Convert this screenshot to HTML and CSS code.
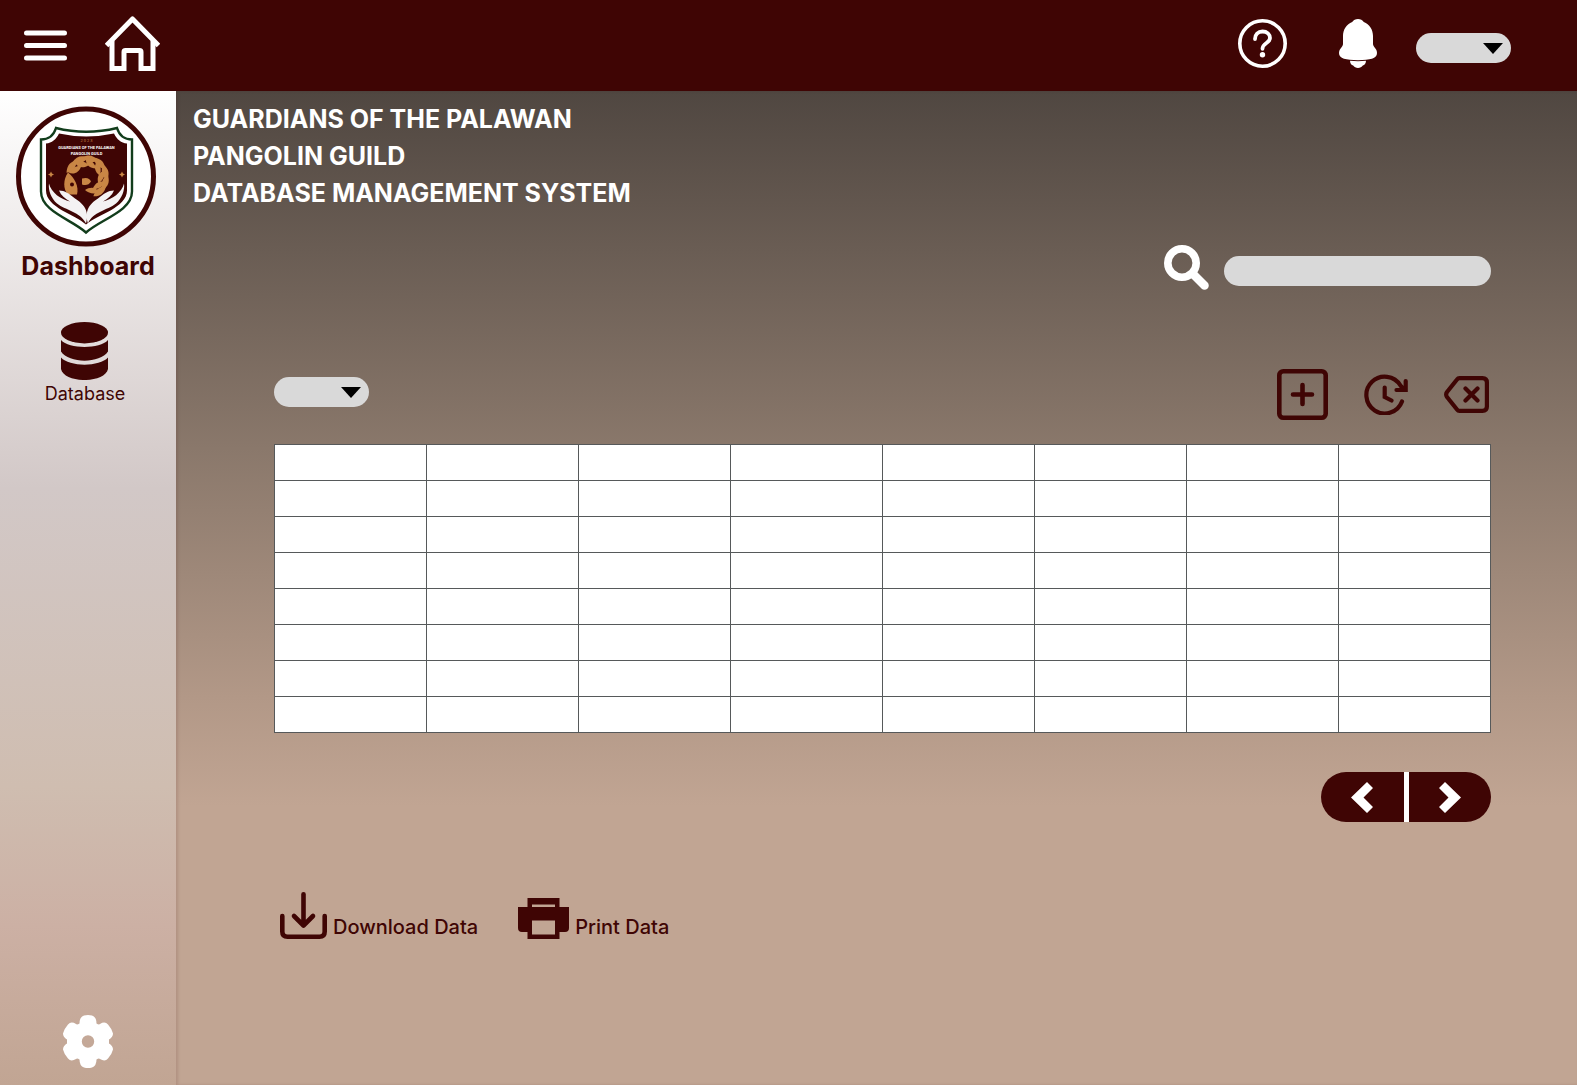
FILE: index.html
```html
<!DOCTYPE html>
<html lang="en">
<head>
<meta charset="utf-8">
<meta name="viewport" content="width=device-width, initial-scale=1">
<title>Guardians of the Palawan Pangolin Guild</title>
<link rel="stylesheet" href="styles.css">
</head>
<body>
<header class="topbar">
  <button class="icon-btn" type="button" aria-label="Menu">
    <svg width="43" height="31" viewBox="0 0 43 31" fill="none" stroke="currentColor" stroke-width="5" stroke-linecap="round"><path d="M2.5 3H40.500M2.500 15.500H40.500M2.500 28H40.500"/></svg>
  </button>
  <a class="icon-btn home" href="#" aria-label="Home">
    <svg width="55" height="55" viewBox="0 0 55 55" fill="none" stroke="currentColor" stroke-width="5"><path d="M1.500 29.500L27.500 3L53.500 29.500" stroke-linejoin="round"/><path d="M7 25V52.500H19V36Q19 34.500 20.500 34.500H34.500Q36 34.500 36 36V52.500H48V25"/></svg>
  </a>
  <div class="topbar-tools">
    <button class="icon-btn" type="button" aria-label="Help">
      <svg width="49" height="49" viewBox="0 0 49 49" fill="none" stroke="currentColor"><circle cx="24.500" cy="24.500" r="22.700" stroke-width="3.600"/><path d="M17 20C17 15.500 20 12.500 24.500 12.500C29 12.500 32 15.300 32 19C32 24.200 24.500 23.800 24.500 29.800" stroke-width="3.800" stroke-linecap="round"/><circle cx="24.500" cy="35.700" r="2.700" fill="currentColor" stroke="none"/></svg>
    </button>
    <button class="icon-btn" type="button" aria-label="Notifications">
      <svg width="38" height="49" viewBox="0 0 38 49" fill="currentColor"><path d="M19 0C21.500 0 23.500 1.200 24.800 3C30.500 5.500 34 10.500 34 17V25C34 28 38 29.500 38 34C38 39.500 31 41.200 19 41.200S0 39.500 0 34C0 29.500 4 28 4 25V17C4 10.500 7.500 5.500 13.200 3C14.500 1.200 16.500 0 19 0Z"/><path d="M11 41.800Q19 42.600 27 41.800C27 44.500 25.500 46 23.800 46.500C22 49.700 16 49.700 14.200 46.500C12.500 46 11 44.500 11 41.800Z"/></svg>
    </button>
    <span class="picker"><select aria-label="Account"><option></option></select><svg width="20" height="11" viewBox="0 0 20 11"><path d="M0 0H20L10 11Z"/></svg></span>
  </div>
</header>
<div class="layout">
  <nav class="sidebar">
    <a class="nav-link dashboard" href="#">
      <svg class="logo" viewBox="0 0 140 140" role="img" aria-label="Guild logo">
        <circle cx="70" cy="70" r="67.500" fill="#fff" stroke="#3f0504" stroke-width="5"/>
        <path d="M40 21.500Q70 29 101 21.500C103 28 108 33 116 33V85C116 105 84 113 70 126C56 113 25 105 25 85V33C33 33 38 28 40 21.500Z" fill="#fff" stroke="#123d1c" stroke-width="2.400"/>
        <path d="M43 27Q70 33 98 27C101 33 105 36.500 111 37V84C111 101 82 108 70 118C59 108 30 101 30 84V37C36 36.500 40 33 43 27Z" fill="#3f0504"/>
        <g class="logo-text" text-anchor="middle"><text class="logo-year" x="70.500" y="35.500">2 0 2 3</text><text x="70.500" y="42">GUARDIANS OF THE PALAWAN</text><text x="70.500" y="48.500">PANGOLIN GUILD</text></g>
        <g fill="#c98645">
          <path d="M52 66C47 73 47 83 52 88L61 88C63 80 59 72 52 66Z"/><path d="M66 72Q73 70 75 75Q72 80 66 78Z"/>
          <path id="scale" d="M70 52C75 53 79 57 80 62C74 62 69 58 70 52Z"/>
          <use href="#scale" transform="rotate(36 71 71)"/><use href="#scale" transform="rotate(72 71 71)"/><use href="#scale" transform="rotate(108 71 71)"/><use href="#scale" transform="rotate(144 71 71)"/><use href="#scale" transform="rotate(-36 71 71)"/><use href="#scale" transform="rotate(-72 71 71)"/>
          <g transform="rotate(16 71 71)"><path id="outer" d="M72 50C80 49 84 52 86 58C80 59 74 56 72 50Z"/><use href="#outer" transform="rotate(32 71 71)"/><use href="#outer" transform="rotate(64 71 71)"/><use href="#outer" transform="rotate(96 71 71)"/><use href="#outer" transform="rotate(-32 71 71)"/><use href="#outer" transform="rotate(-64 71 71)"/><use href="#outer" transform="rotate(-96 71 71)"/></g>
          <path d="M35 65L36 67L38 68L36 69L35 71L34 69L32 68L34 67ZM106 65L107 67L109 68L107 69L106 71L105 69L103 68L105 67Z"/>
        </g>
        <circle cx="56" cy="78" r="2" fill="#3f0504"/>
        <g fill="#f4f2f3"><path id="hand" d="M33 77C32 83 35 92 41 97C50 104 64 105 70 117C74 104 67 97 59 92C53 87 49 84 43 84C45 89 49 92 54 95C45 93 35 86 33 77Z"/><path d="M108 77C109 83 106 92 100 97C91 104 77 105 72 117C68 104 74 97 82 92C88 87 92 84 98 84C96 89 92 92 87 95C96 93 106 86 108 77Z"/></g>
      </svg>
      <span class="dashboard-label">Dashboard</span>
    </a>
    <a class="nav-link database" href="#">
      <svg width="47" height="58" viewBox="0 0 47 58" fill="currentColor"><ellipse cx="23.500" cy="10.700" rx="23.500" ry="10.700"/><path d="M0 18C8 27.300 39 27.300 47 18V29.500C39 41.700 8 41.700 0 29.500Z"/><path d="M0 35.500C8 45 39 45 47 35.500V47C44 61.700 3 61.700 0 47Z"/></svg>
      <span>Database</span>
    </a>
    <button class="icon-btn settings" type="button" aria-label="Settings">
      <svg width="50" height="53" viewBox="0 0 50 53" fill="currentColor" fill-rule="evenodd"><path d="M21 0.500Q25 -0.500 29 0.500Q33.500 2 33.500 8.500Q36 10 37 9Q42 6 45 9.500Q49 14 50 18.500Q50 22 46 24.500V28.500Q50 31 50 34.500Q49 39 45 43.500Q42 47 37 44Q36 43 33.500 44.500Q33.500 51 29 52.500Q25 53.500 21 52.500Q16.500 51 16.500 44.500Q14 43 13 44Q8 47 5 43.500Q1 39 0 34.500Q0 31 4 28.500V24.500Q0 22 0 18.500Q1 14 5 9.500Q8 6 13 9Q14 10 16.500 8.500Q16.500 2 21 0.500ZM25 20.300A6.200 6.200 0 1 0 25 32.700A6.200 6.200 0 1 0 25 20.300Z"/></svg>
    </button>
  </nav>
  <main class="main">
    <h1 class="title">GUARDIANS OF THE PALAWAN<br>PANGOLIN GUILD<br>DATABASE MANAGEMENT SYSTEM</h1>
    <div class="content">
      <form class="search" role="search">
        <label for="q" aria-label="Search"><svg width="45" height="45" viewBox="0 0 45 45" fill="none" stroke="currentColor"><circle cx="18" cy="18" r="14.200" stroke-width="7.600"/><path d="M29 29L40.500 40.500" stroke-width="8.500" stroke-linecap="round"/></svg></label>
        <input id="q" type="search">
      </form>
      <div class="toolbar">
        <span class="picker"><select aria-label="Table"><option></option></select><svg width="20" height="11" viewBox="0 0 20 11"><path d="M0 0H20L10 11Z"/></svg></span>
        <div class="actions">
          <button class="icon-btn" type="button" aria-label="Add"><svg width="51" height="51" viewBox="0 0 51 51" fill="none" stroke="currentColor" stroke-width="4.600" stroke-linecap="round"><rect x="2.300" y="2.300" width="46.400" height="46.400" rx="4"/><path d="M25.500 16V35M16 25.500H35"/></svg></button>
          <button class="icon-btn" type="button" aria-label="Update"><svg width="44" height="41" viewBox="0 0 44 41" fill="none" stroke="currentColor" stroke-width="4.200" stroke-linecap="round"><path d="M38 27.500A18.400 18.400 0 1 1 36.500 11.500L40 15.700M41.700 7V16H32.500M20.700 13.500V23L27.500 26.500"/></svg></button>
          <button class="icon-btn" type="button" aria-label="Delete"><svg width="45" height="37" viewBox="0 0 45 37" fill="none" stroke="currentColor" stroke-width="4.200" stroke-linecap="round" stroke-linejoin="round"><path d="M15.500 2.100H38.500Q42.900 2.100 42.900 6.500V30.500Q42.900 34.900 38.500 34.900H15.500Q14 34.900 13 33.500L3 21Q1.300 18.500 3 16L13 3.500Q14 2.100 15.500 2.100ZM21.500 12.500L33.500 24.500M33.500 12.500L21.500 24.500"/></svg></button>
        </div>
      </div>
      <table class="grid" aria-label="Records">
        <tbody>
          <tr><td></td><td></td><td></td><td></td><td></td><td></td><td></td><td></td></tr>
          <tr><td></td><td></td><td></td><td></td><td></td><td></td><td></td><td></td></tr>
          <tr><td></td><td></td><td></td><td></td><td></td><td></td><td></td><td></td></tr>
          <tr><td></td><td></td><td></td><td></td><td></td><td></td><td></td><td></td></tr>
          <tr><td></td><td></td><td></td><td></td><td></td><td></td><td></td><td></td></tr>
          <tr><td></td><td></td><td></td><td></td><td></td><td></td><td></td><td></td></tr>
          <tr><td></td><td></td><td></td><td></td><td></td><td></td><td></td><td></td></tr>
          <tr><td></td><td></td><td></td><td></td><td></td><td></td><td></td><td></td></tr>
        </tbody>
      </table>
      <div class="pager">
        <button type="button" aria-label="Previous page"><svg width="22" height="31" viewBox="0 0 22 31" fill="currentColor"><path d="M16 0L22 6L12.500 15.500L22 25L16 31L0 15.500Z"/></svg></button>
        <button type="button" aria-label="Next page"><svg width="22" height="31" viewBox="0 0 22 31" fill="currentColor"><path d="M6 0L0 6L9.500 15.500L0 25L6 31L22 15.500Z"/></svg></button>
      </div>
      <div class="exports">
        <button class="export" type="button"><svg width="47" height="47" viewBox="0 0 47 47" fill="none" stroke="currentColor" stroke-width="4.600" stroke-linecap="round" stroke-linejoin="round"><path d="M2.300 24V39.500Q2.300 44.700 7.500 44.700H39.500Q44.700 44.700 44.700 39.500V24M23.500 2.300V33M14 24L23.500 33.500L33 24"/></svg><span>Download Data</span></button>
        <button class="export" type="button"><svg width="51" height="41" viewBox="0 0 51 41" fill="currentColor" fill-rule="evenodd"><path d="M9.500 0H41.500V9H51V30Q51 34 47 34H41.500V41H9.500V34H4Q0 34 0 30V9H9.500ZM14 6.500V9H37V6.500ZM14 22.500V36.500H37V22.500Z"/></svg><span>Print Data</span></button>
      </div>
    </div>
  </main>
</div>
</body>
</html>
```
FILE: styles.css
```css
:root {
  --maroon: #3f0504;
  --pill: #d9d9d9;
}

* { box-sizing: border-box; }

body {
  margin: 0;
  min-height: 100vh;
  display: flex;
  flex-direction: column;
  font-family: Inter, "Liberation Sans", sans-serif;
  color: var(--maroon);
}

svg { display: block; flex: none; }

button, input, select { font: inherit; color: inherit; border: 0; padding: 0; }

.icon-btn { display: block; background: none; color: inherit; cursor: pointer; }

.topbar {
  display: flex;
  align-items: center;
  height: 91px;
  padding: 0 66px 4px 24px;
  background: var(--maroon);
  color: #fff;
}

.topbar > .icon-btn:first-child { padding-top: 4px; }

.home { margin-left: 38px; }

.topbar-tools {
  display: flex;
  align-items: center;
  margin-left: auto;
}

.topbar-tools .icon-btn { margin-right: 52px; }
.topbar-tools .icon-btn + .icon-btn { margin-right: 39px; }
.topbar-tools .picker { margin-top: 8px; }

.picker { position: relative; display: block; width: 95px; height: 30px; }

.picker select {
  appearance: none;
  width: 100%;
  height: 100%;
  border-radius: 15px;
  background: var(--pill);
  color: #000;
}

.picker svg { position: absolute; right: 8px; top: 10px; pointer-events: none; color: #000; }

.layout { flex: 1; display: flex; }

.sidebar {
  width: 176px;
  display: flex;
  flex-direction: column;
  align-items: center;
  padding: 15px 0 17px;
  background: linear-gradient(#fff 0%, #d2c8c7 40%, #cfbdb0 70%, #ccb0a4 84%, #c1a593 100%);
}

.nav-link {
  display: flex;
  flex-direction: column;
  align-items: center;
  color: inherit;
  text-decoration: none;
}

.logo { width: 140px; height: 141px; margin-right: 4px; }

.logo-text { fill: #fff; font: 700 4px Roboto, sans-serif; }
.logo-year { fill: #c98645; font-weight: 400; }

.dashboard-label { font-size: 25px; font-weight: 700; line-height: 38px; }

.database { margin-top: 37px; padding-right: 6px; font-size: 18px; line-height: 27px; }

.settings { margin-top: auto; color: #fff; }

.main {
  flex: 1;
  padding: 10px 86px 0 98px;
  background: linear-gradient(#504741 0%, #8a786b 36%, #b29887 61%, #c1a593 72%);
  box-shadow: inset 2px 0 3px rgba(63, 5, 4, 0.12);
}

.title {
  margin: 0 0 0 -81px;
  color: #fff;
  font-size: 25px;
  font-weight: 700;
  line-height: 37px;
}

.search {
  display: flex;
  align-items: center;
  justify-content: flex-end;
  gap: 15px;
  margin-top: 33px;
  color: #fff;
}

.search input {
  width: 267px;
  height: 30px;
  margin-top: 7px;
  padding: 0 15px;
  border-radius: 15px;
  background: var(--pill);
  color: var(--maroon);
}

.toolbar {
  display: flex;
  align-items: center;
  justify-content: space-between;
  margin-top: 79px;
}

.toolbar .picker { margin-bottom: 5px; }

.actions { display: flex; align-items: center; gap: 36px; padding-right: 2px; }

.grid {
  width: 100%;
  margin-top: 24px;
  table-layout: fixed;
  border-collapse: collapse;
  background: #fff;
}

.grid td { height: 36px; padding: 0; border: 1px solid #56595a; }

.pager {
  display: flex;
  width: 170px;
  height: 50px;
  margin: 39px 0 0 auto;
  border-radius: 25px;
  overflow: hidden;
}

.pager button {
  flex: 1;
  display: flex;
  align-items: center;
  justify-content: center;
  background: var(--maroon);
  color: #fff;
}

.pager button:first-child { padding-left: 0; border-right: 5px solid #fff; }

.exports { display: flex; gap: 40px; margin-top: 70px; padding-left: 6px; }

.export {
  display: flex;
  align-items: flex-end;
  gap: 6px;
  background: none;
  font-size: 20px;
  font-weight: 500;
  line-height: 24px;
}
```
